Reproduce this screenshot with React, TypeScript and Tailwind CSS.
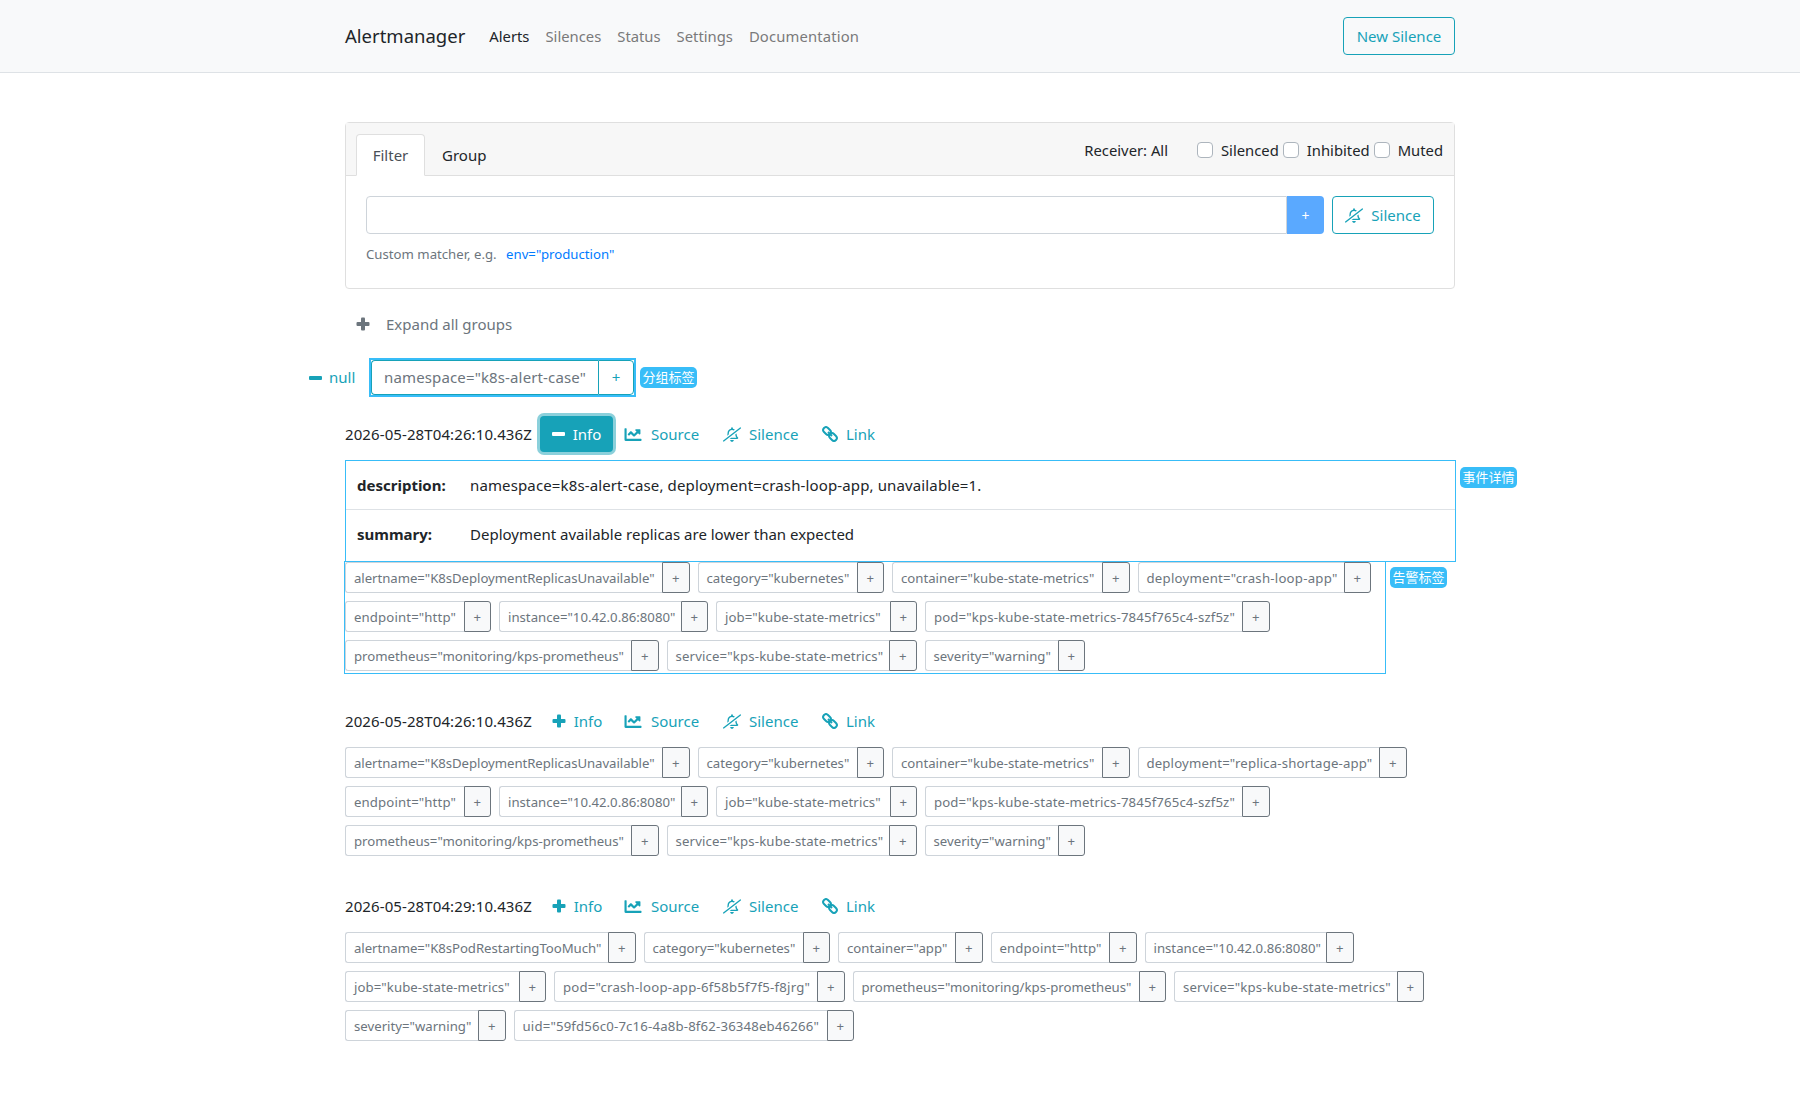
import { FaChartLine, FaRegBellSlash } from "react-icons/fa";

const FONT = "font-['Noto_Sans','Noto_Sans_CJK_SC',sans-serif]";

type TagDef = { text: string; box: string; fit?: string };

const CATEGORY: TagDef = { text: 'category="kubernetes"', box: "w-[159px]" };
const CONTAINER: TagDef = { text: 'container="kube-state-metrics"', box: "w-[210px]" };
const ALERTNAME: TagDef = {
  text: 'alertname="K8sDeploymentReplicasUnavailable"',
  box: "w-[317px]",
  fit: "tracking-[-0.05px]",
};
const ENDPOINT: TagDef = { text: 'endpoint="http"', box: "w-[118.5px]", fit: "tracking-[0.13px]" };
const INSTANCE: TagDef = { text: 'instance="10.42.0.86:8080"', box: "w-[181.5px]" };
const JOB: TagDef = { text: 'job="kube-state-metrics"', box: "w-[173.5px]", fit: "tracking-[0.08px]" };
const POD: TagDef = {
  text: 'pod="kps-kube-state-metrics-7845f765c4-szf5z"',
  box: "w-[317px]",
  fit: "tracking-[0.14px]",
};
const PROMETHEUS: TagDef = { text: 'prometheus="monitoring/kps-prometheus"', box: "w-[286px]" };
const SERVICE: TagDef = {
  text: 'service="kps-kube-state-metrics"',
  box: "w-[222.5px]",
  fit: "tracking-[0.15px]",
};
const SEVERITY: TagDef = { text: 'severity="warning"', box: "w-[133px]" };

const FIRST_ROWS: TagDef[][] = [
  [
    ALERTNAME,
    CATEGORY,
    CONTAINER,
    { text: 'deployment="crash-loop-app"', box: "w-[206px]", fit: "tracking-[0.24px]" },
  ],
  [ENDPOINT, INSTANCE, JOB, POD],
  [PROMETHEUS, SERVICE, SEVERITY],
];

const SECOND_ROWS: TagDef[][] = [
  [
    ALERTNAME,
    CATEGORY,
    CONTAINER,
    { text: 'deployment="replica-shortage-app"', box: "w-[241.5px]", fit: "tracking-[0.15px]" },
  ],
  [ENDPOINT, INSTANCE, JOB, POD],
  [PROMETHEUS, SERVICE, SEVERITY],
];

const THIRD_ROWS: TagDef[][] = [
  [
    { text: 'alertname="K8sPodRestartingTooMuch"', box: "w-[263px]", fit: "tracking-[-0.05px]" },
    CATEGORY,
    { text: 'container="app"', box: "w-[117px]" },
    ENDPOINT,
    INSTANCE,
  ],
  [
    JOB,
    { text: 'pod="crash-loop-app-6f58b5f7f5-f8jrg"', box: "w-[263px]", fit: "tracking-[0.22px]" },
    PROMETHEUS,
    SERVICE,
  ],
  [
    SEVERITY,
    { text: 'uid="59fd56c0-7c16-4a8b-8f62-36348eb46266"', box: "w-[313px]", fit: "tracking-[0.17px]" },
  ],
];

function PlusIcon({ className }: { className?: string }) {
  return (
    <svg viewBox="0 0 14 14" className={className} fill="currentColor">
      <rect x="5" y="0.5" width="4" height="13" rx="1" />
      <rect x="0.5" y="5" width="13" height="4" rx="1" />
    </svg>
  );
}

function MinusIcon({ className }: { className?: string }) {
  return <span className={`block h-[4px] rounded-[1px] bg-current ${className ?? ""}`} />;
}

function BellIcon() {
  return <FaRegBellSlash className="h-[17px] w-[18px] -scale-x-100" />;
}

function LinkIcon() {
  return (
    <svg viewBox="0 0 16 16" className="h-[16px] w-[16px]" fill="none" stroke="currentColor" strokeWidth="2">
      <rect x="0.8" y="2.2" width="8.4" height="5.6" rx="2.8" transform="rotate(45 5 5)" />
      <rect x="6.8" y="8.2" width="8.4" height="5.6" rx="2.8" transform="rotate(45 11 11)" />
      <path d="M6 6 10 10" />
    </svg>
  );
}

function Tag({ tag }: { tag: TagDef }) {
  return (
    <div className="flex h-[31px] text-[13.2px] leading-none">
      <span
        className={`flex items-center rounded-l-[3px] border border-r-0 border-[#ced4da] pl-[8px] pt-[2px] text-[#6c757d] whitespace-nowrap ${tag.box} ${tag.fit ?? ""}`}
      >
        {tag.text}
      </span>
      <span className="flex w-[27.5px] items-center justify-center rounded-r-[3px] border border-[#6c757d] bg-[#f8f9fa] pt-[2px] text-[#6c757d]">
        +
      </span>
    </div>
  );
}

function TagRows({ rows }: { rows: TagDef[][] }) {
  return (
    <div className="flex flex-col gap-[8px]">
      {rows.map((row) => (
        <div key={row[0].text + row.length} className="flex gap-[8px]">
          {row.map((t) => (
            <Tag key={t.text} tag={t} />
          ))}
        </div>
      ))}
    </div>
  );
}

function Note({ text }: { text: string }) {
  return (
    <span className="flex h-[21px] w-[57px] items-center justify-center rounded-[5px] bg-[#38bdf8] text-[13px] text-white whitespace-nowrap">
      {text}
    </span>
  );
}

function AlertHeader({ time, open }: { time: string; open?: boolean }) {
  const link = "flex items-center gap-[8px] text-[#17a2b8]";
  return (
    <div className="flex h-[38px] items-center text-[15px] text-[#212529]">
      <span className="w-[195px] tracking-[0.1px] whitespace-nowrap">{time}</span>
      {open ? (
        <span className="flex h-[36px] w-[73px] items-center justify-center gap-[8px] rounded-[4px] bg-[#17a2b8] text-white shadow-[0_0_0_3px_rgba(23,162,184,0.5)]">
          <MinusIcon className="w-[13px]" />
          Info
        </span>
      ) : (
        <span className={`${link} w-[73px] justify-center pl-[1px]`}>
          <PlusIcon className="h-[14px] w-[14px]" />
          Info
        </span>
      )}
      <span className={`${link} ml-[11px] w-[99px] gap-[9px]`}>
        <FaChartLine className="h-[17px] w-[18px]" />
        Source
      </span>
      <span className={`${link} w-[99px]`}>
        <BellIcon />
        Silence
      </span>
      <span className={`${link} gap-[7px]`}>
        <LinkIcon />
        Link
      </span>
    </div>
  );
}

function Check({ label, className }: { label: string; className?: string }) {
  return (
    <span className={`flex items-center ${className ?? ""}`}>
      <span className="mr-[8px] h-[16px] w-[16px] rounded-[4px] border border-[#adb5bd] bg-white" />
      {label}
    </span>
  );
}

export default function App() {
  return (
    <div className={`${FONT} min-h-[1100px] bg-white text-[#212529]`}>
      <nav className="h-[73px] border-b border-[#dee2e6] bg-[#f8f9fa]">
        <div className="mx-auto flex h-full w-[1110px] items-center">
          <span className="mr-[24px] text-[18.5px] text-[#212529]">Alertmanager</span>
          <div className="flex gap-[16px] text-[14.8px] text-[#7a7a7a]">
            <span className="text-[#212529]">Alerts</span>
            <span>Silences</span>
            <span>Status</span>
            <span>Settings</span>
            <span className="tracking-[0.15px]">Documentation</span>
          </div>
          <span className="ml-auto flex h-[38px] w-[112px] items-center justify-center rounded-[4px] border border-[#17a2b8] text-[15px] text-[#17a2b8]">
            New Silence
          </span>
        </div>
      </nav>

      <main className="mx-auto w-[1110px] pt-[49px]">
        <section className="h-[167px] rounded-[4px] border border-[#dfdfdf]">
          <div className="flex h-[53px] items-end border-b border-[#dfdfdf] bg-[#f7f7f7] pl-[10px] text-[15px]">
            <span className="-mb-px flex h-[42px] w-[69px] items-center justify-center rounded-t-[4px] border border-b-white border-[#dfdfdf] bg-white text-[#495057]">
              Filter
            </span>
            <span className="flex h-[41px] items-center pl-[17px] pt-[2px]">Group</span>
            <div className="mb-[6px] ml-auto flex h-[38px] items-center pr-[11px] text-[14.8px]">
              <span>Receiver: All</span>
              <Check label="Silenced" className="ml-[29px]" />
              <Check label="Inhibited" className="ml-[4px]" />
              <Check label="Muted" className="ml-[4px]" />
            </div>
          </div>
          <div className="px-[20px] pt-[20px]">
            <div className="flex h-[38px] gap-[8px]">
              <div className="flex flex-1">
                <div className="flex-1 rounded-l-[4px] border border-[#ced4da]" />
                <span className="flex w-[37px] items-center justify-center rounded-r-[4px] bg-[#5aa9ff] text-[14px] text-white">
                  +
                </span>
              </div>
              <span className="flex w-[102px] items-center justify-center gap-[8px] rounded-[4px] border border-[#17a2b8] text-[15px] text-[#17a2b8]">
                <BellIcon />
                Silence
              </span>
            </div>
            <p className="mt-[11px] text-[13.2px] text-[#6c757d]">
              Custom matcher, e.g. <span className="ml-[6px] text-[#007bff]">env="production"</span>
            </p>
          </div>
        </section>

        <div className="mt-[16px] flex h-[38px] items-center pl-[11px] text-[15px] text-[#6c757d]">
          <PlusIcon className="mr-[16px] h-[14px] w-[14px]" />
          Expand all groups
        </div>

        <div className="mt-[15px] -ml-[36px] flex h-[39px] items-center">
          <span className="flex w-[60px] items-center gap-[7px] text-[15px] text-[#17a2b8]">
            <MinusIcon className="w-[13px]" />
            null
          </span>
          <div className="flex h-[39px] w-[267px] border-2 border-[#38bdf8] text-[15px]">
            <span className="flex w-[227px] items-center rounded-l-[4px] border border-r-0 border-[#17a2b8] pl-[12px] tracking-[0.14px] text-[#6c757d]">
              namespace="k8s-alert-case"
            </span>
            <span className="flex flex-1 items-center justify-center rounded-r-[4px] border border-[#17a2b8] text-[#17a2b8]">
              +
            </span>
          </div>
          <span className="ml-[4px]">
            <Note text="分组标签" />
          </span>
        </div>

        <div className="mt-[18px]">
          <AlertHeader time="2026-05-28T04:26:10.436Z" open />
        </div>

        <div className="relative mt-[7px] h-[102px] w-[1111px] border border-[#38bdf8] text-[15px]">
          <div className="flex h-[49px] items-center border-b border-[#dee2e6] pl-[11px]">
            <b className="w-[113px]">description:</b>
            <span className="tracking-[0.13px]">namespace=k8s-alert-case, deployment=crash-loop-app, unavailable=1.</span>
          </div>
          <div className="flex h-[49px] items-center pl-[11px]">
            <b className="w-[113px]">summary:</b>
            Deployment available replicas are lower than expected
          </div>
          <span className="absolute left-[calc(100%+5px)] top-[6px]">
            <Note text="事件详情" />
          </span>
        </div>

        <div className="relative -ml-px -mt-px h-[113px] w-[1042px] border border-[#38bdf8]">
          <TagRows rows={FIRST_ROWS} />
          <span className="absolute left-[calc(100%+5px)] top-[5px]">
            <Note text="告警标签" />
          </span>
        </div>

        <div className="mt-[28px]">
          <AlertHeader time="2026-05-28T04:26:10.436Z" />
        </div>
        <div className="mt-[7px]">
          <TagRows rows={SECOND_ROWS} />
        </div>

        <div className="mt-[31px]">
          <AlertHeader time="2026-05-28T04:29:10.436Z" />
        </div>
        <div className="mt-[7px]">
          <TagRows rows={THIRD_ROWS} />
        </div>
      </main>
    </div>
  );
}
